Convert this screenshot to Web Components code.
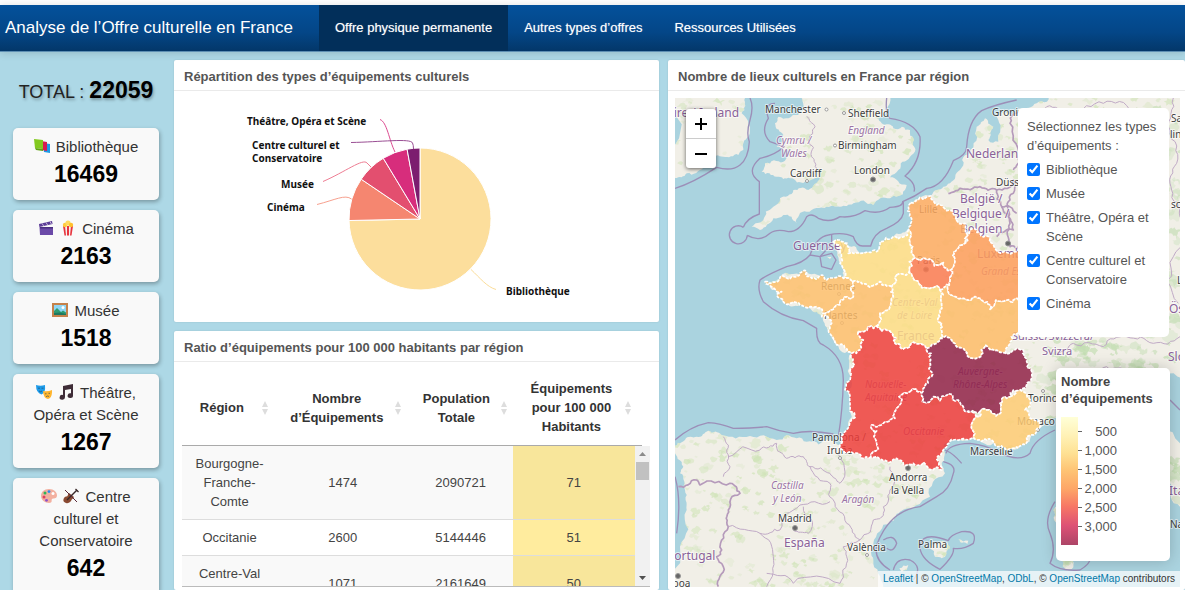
<!DOCTYPE html>
<html lang="fr">
<head>
<meta charset="utf-8">
<title>Analyse de l’Offre culturelle en France</title>
<meta name="viewport" content="width=device-width, initial-scale=1">
<style>
  html, body { height: 100%; margin: 0; }
  body { background: #fff; color: #444; font: 13px/19px "Liberation Sans", Arial, sans-serif; overflow: hidden; }
</style>
</head>
<body>
<culture-dashboard></culture-dashboard>

<script>
const define = (name, html, setup) => {
  const template = document.createElement('template');
  template.innerHTML = html;
  customElements.define(name, class extends HTMLElement {
    constructor() {
      super();
      this.attachShadow({ mode: 'open' }).append(template.content.cloneNode(true));
    }
    connectedCallback() { if (setup) setup(this, this.shadowRoot); }
  });
};

/* ---------- Navigation ---------- */
define('nav-bar', `
<style>
  :host { display: block; box-sizing: border-box; height: 47px; background: linear-gradient(#04519b, #044687 60%, #033769);
    border-bottom: 1px solid #5e8fb3; box-shadow: 0 1px 8px rgba(0,0,0,.15); position: relative; }
  nav { display: flex; height: 100%; align-items: stretch; }
  h1 { margin: 0; padding: 0 26px 0 5px; font-size: 17px; font-weight: 400; line-height: 46px; color: #fff; white-space: nowrap; }
</style>
<nav><h1><slot name="brand"></slot></h1><slot></slot></nav>`);

define('nav-item', `
<style>
  :host { display: block; }
  a { display: block; padding: 0 16px; line-height: 46px; font-size: 13px; color: #fff; text-decoration: none; white-space: nowrap;
    text-shadow: 0 0 1px rgba(255,255,255,.5); }
  :host([active]) a { background: #022f5a; }
</style>
<a href="#"><slot></slot></a>`);

/* ---------- Sidebar cards ---------- */
define('stat-card', `
<style>
  :host { display: block; box-sizing: border-box; padding: 8px 10px 10px; text-align: center; background: #f9f9f9;
    border-radius: 5px; box-shadow: 1px 2px 4px rgba(0,0,0,.3); }
  .label { font-size: 15px; line-height: 22px; color: #333; }
  .value { font-size: 23px; line-height: 32px; font-weight: 700; color: #000; }
</style>
<div class="label"><slot></slot></div>
<div class="value"><slot name="value"></slot></div>`);

const ICONS = {
  books: '<path fill="#1c9be6" d="M9 5l7 1v9l-6-1z"/><path fill="#d81b50" d="M7 3l6 1v9l-5-1z"/><path fill="#83c91f" d="M0 1l9 1v9l-8-1z"/><path fill="#5fa40f" d="M1 10l8 1v2l-7-1z"/>',
  clap: '<path fill="#5b3b96" d="M1 4l13-3 .6 3L1.4 7z"/><path stroke="#c9bddf" stroke-width="1" d="M4 3.400l1.600 2.400M8 2.500l1.600 2.400M12 1.600L13.400 4"/><path fill="#6b4aa8" d="M1.500 7H15v8H2z"/><path fill="#4a2f80" d="M2 7h13v1.500H2z"/>',
  popcorn: '<path fill="#f4f0ee" d="M3 6h10l-1.500 9.500h-7z"/><path fill="#e8343e" d="M3 6h2l1 9.500H4.500zM7 6h2v9.500H7zM11 6h2l-1.500 9.500H10z"/><circle cx="5" cy="5" r="2.200" fill="#ffcb3d"/><circle cx="8" cy="3" r="2.600" fill="#ffd95e"/><circle cx="11" cy="5" r="2.200" fill="#ffc12f"/>',
  frame: '<path fill="#c5824b" d="M0 1h16v14H0z"/><path fill="#8fd6f5" d="M2 3h12v10H2z"/><circle cx="11" cy="5.500" r="1.500" fill="#fff"/><path fill="#2d9c72" d="M2 9l3-3 4 4 2-1.500 3 2V13H2z"/><path fill="#1e7860" d="M2 11l6-.5 6 1.500v1H2z"/>',
  masks: '<path fill="#1d9bea" d="M0 1q4.500 1.500 9 0 .8 8-3.500 9.500Q0 9 0 1z"/><path fill="#ffb52e" d="M7 7q4.500 1 9-1 .4 8-4 9-4.600-.8-5-8z"/><path d="M2 4.200h2M5.500 4.200h2M9 9.800h1.500M12.500 9.300H14M3 7q1.500 1.500 3 0M10 12.800q1.500-1.500 3-.3" fill="none" stroke="#23455f" stroke-width=".6"/>',
  notes: '<path fill="#3f2d38" d="M5 2l10-2v11.500a2.700 2.400 0 1 1-2-2.200V5L7 6v7.300A2.700 2.400 0 1 1 5 11z"/>',
  palette: '<path fill="#f3b0a0" d="M8 1c5 0 8 3 8 6.500S12 10 11 11s1 4-3 4-8-3-8-7 3-7 8-7z"/><circle cx="4" cy="5" r="1.500" fill="#2fb457"/><circle cx="8" cy="3.600" r="1.400" fill="#2b8bea"/><circle cx="3" cy="9" r="1.500" fill="#e0405e"/><circle cx="5.500" cy="12.300" r="1.400" fill="#8e52c7"/><circle cx="12" cy="5.500" r="1.500" fill="#fff"/>',
  violin: '<path fill="#8a4a32" d="M6 5l5 4c-1 2-2 1.800-2.500 3S6 16 3 15s-3-3-2-5 3-1 3.500-2S5 6 6 5z"/><path stroke="#3a2a2a" stroke-width="1.500" d="M4 12l10-10"/><path stroke="#5a2a3a" stroke-width="1" d="M2 2l12 12"/><path stroke="#3a2a2a" stroke-width="1.200" d="M12.500 1l3 3"/>'
};
define('emoji-icon', `
<style>:host { display: inline-block; width: 16px; height: 16px; margin-right: 6px; vertical-align: -2px; } svg { display: block; }</style>
<svg width="16" height="16" viewBox="0 0 16 16" fill="none" aria-hidden="true"></svg>`,
(el, root) => { root.querySelector('svg').innerHTML = ICONS[el.getAttribute('name')]; });

/* ---------- Card with a title ---------- */
define('dash-card', `
<style>
  :host { display: flex; flex-direction: column; background: #fff; border-radius: 2px; min-height: 0; min-width: 0; box-shadow: 0 0 2px rgba(0,0,0,.12); }
  h2 { margin: 0; padding: 8px 10px 4px; font-size: 13px; line-height: 18px; font-weight: 700; color: #555; border-bottom: 1px solid #eaeaea; }
  .body { flex: 1; min-height: 0; display: flex; flex-direction: column; }
</style>
<h2><slot name="title"></slot></h2>
<div class="body"><slot></slot></div>`);

/* ---------- Pie chart ---------- */
define('pie-chart', `
<style>
  :host { display: block; height: 100%; }
  svg { display: block; width: 100%; height: 100%; }
  text { font: 700 10px "Noto Sans", sans-serif; fill: #111; }
</style>
<svg viewBox="174 91 485 231" role="img" aria-label="Répartition des types d’équipements culturels">
  <g id="slices" stroke="#fff" stroke-width="1"></g>
  <g fill="none" stroke-width="1">
    <path stroke="#dd4a90" d="M380 119.500C387 122 389 140 395 152"/>
    <path stroke="#9a4f94" d="M351 142.500C380 142 411 138 412.500 143Q413.500 145 413.500 149"/>
    <path stroke="#ee7d93" d="M323 181.500C345 172 363 158 367 163L371 167"/>
    <path stroke="#f7a08e" d="M317 204.500C335 200 345 194 351.500 199"/>
    <path stroke="#fbdd99" d="M471 269.500C480 278 487 287 496 289.500"/>
  </g>
  <text x="247" y="125">Théâtre, Opéra et Scène</text>
  <text x="252" y="149">Centre culturel et</text>
  <text x="252" y="162">Conservatoire</text>
  <text x="281" y="188">Musée</text>
  <text x="267" y="211">Cinéma</text>
  <text x="506" y="295">Bibliothèque</text>
</svg>`,
(el, root) => {
  const data = [[16469, '#fcde9c'], [2163, '#f58670'], [1518, '#e34f6f'], [1267, '#d72d7c'], [642, '#7c1d6f']];
  const total = data.reduce((s, d) => s + d[0], 0), cx = 420, cy = 219, r = 71;
  let a = 0;
  root.getElementById('slices').innerHTML = data.map(([n, c]) => {
    const b = a + n / total * 2 * Math.PI;
    const p = t => (cx + r * Math.sin(t)).toFixed(2) + ' ' + (cy - r * Math.cos(t)).toFixed(2);
    const d = `M${cx} ${cy}L${p(a)}A${r} ${r} 0 ${b - a > Math.PI ? 1 : 0} 1 ${p(b)}Z`;
    a = b;
    return `<path fill="${c}" d="${d}"/>`;
  }).join('');
});

/* ---------- Ratio table ---------- */
define('ratio-table', `
<style>
  :host { display: flex; flex-direction: column; flex: 1; min-height: 0; padding: 8px 9px 3px 8px; }
  table { table-layout: fixed; border-collapse: collapse; text-align: center; }
  .head { width: calc(100% - 8px); border-bottom: 1px solid #aaa; }
  .rows { flex: 1; min-width: 0; align-self: flex-start; }
  .c1 { width: 21%; } .c2 { width: 29%; } .c3 { width: 23%; } .c4 { width: 27%; }
  th { padding: 9px 0; color: #333; font-size: 13px; line-height: 19px; }
  th div { display: flex; align-items: center; justify-content: center; }
  th span { flex: 1; }
  th svg { flex: none; width: 6px; height: 14px; margin-right: 11px; fill: #ddd; }
  td { padding: 8px 4px; font-size: 13px; line-height: 19px; color: #444; border-bottom: 1px solid #ddd; }
  tr:nth-child(odd) td { background: #f9f9f9; }
  tr td:last-child { background: #ffec9e; }
  tr:nth-child(odd) td:last-child { background: #f8e69b; }
  td:first-child { padding: 8px 12px; }
  .view { display: flex; flex: 1; min-height: 0; overflow: hidden; border-bottom: 1px solid #bbb; }
  .rail { display: flex; flex-direction: column; align-items: center; width: 15px; background: #f1f1f1; }
  .thumb { width: 13px; height: 18px; background: #c1c1c1; margin-bottom: auto; }
  .rail svg { display: block; width: 15px; height: 16px; flex: none; }
</style>
<table class="head">
  <colgroup><col class="c1"><col class="c2"><col class="c3"><col class="c4"></colgroup>
  <thead><tr></tr></thead>
</table>
<div class="view">
  <table class="rows">
    <colgroup><col class="c1"><col class="c2"><col class="c3"><col class="c4"></colgroup>
    <tbody></tbody>
  </table>
  <div class="rail">
    <svg viewBox="0 0 15 16"><path fill="#8b8b8b" d="M4 10h7l-3.500-4z"/></svg>
    <div class="thumb"></div>
    <svg viewBox="0 0 15 16"><path fill="#505050" d="M4 6h7l-3.500 4z"/></svg>
  </div>
</div>`,
(el, root) => {
  const heads = ['Région', 'Nombre<br>d’Équipements', 'Population<br>Totale', 'Équipements<br>pour 100 000<br>Habitants'];
  const rows = [['Bourgogne-<br>Franche-<br>Comte', 1474, 2090721, 71], ['Occitanie', 2600, 5144446, 51], ['Centre-Val<br>de Loire', 1071, 2161649, 50]];
  root.querySelector('thead tr').innerHTML = heads.map(h =>
    `<th scope="col"><div><span>${h}</span><svg viewBox="0 0 6 14" aria-hidden="true"><path d="M3 0l3 6H0zM3 14l3-6H0z"/></svg></div></th>`).join('');
  root.querySelector('tbody').innerHTML = rows.map(r => '<tr>' + r.map(c => `<td>${c}</td>`).join('') + '</tr>').join('');
});

/* ---------- Map ---------- */
// Breaks each straight segment into an irregular coastline. The noise depends
// only on the two end points, so neighbours that share a border stay joined.
const hash = (x, y) => { const s = Math.sin(x * 12.9898 + y * 78.233) * 43758.5453; return s - Math.floor(s); };
const roughen = (str, closed, amount = .22) => {
  const pts = str.trim().split(/\s+/).map(p => p.split(',').map(Number));
  const split = (a, b, depth) => {
    const dx = b[0] - a[0], dy = b[1] - a[1], len = Math.hypot(dx, dy);
    if (depth === 0 || len < 9) return [b];
    const k = (hash(a[0] + b[0], a[1] + b[1]) - .5) * amount * 2;
    const m = [(a[0] + b[0]) / 2 - dy * k, (a[1] + b[1]) / 2 + dx * k];
    return [...split(a, m, depth - 1), ...split(m, b, depth - 1)];
  };
  const out = [pts[0]];
  const n = closed ? pts.length : pts.length - 1;
  for (let i = 0; i < n; i++) {
    const a = pts[i], b = pts[(i + 1) % pts.length];
    const swap = a[0] > b[0] || (a[0] === b[0] && a[1] > b[1]);
    if (swap) { const s = split(b, a, 3); s.pop(); out.push(...s.reverse(), b); }
    else out.push(...split(a, b, 3));
  }
  return 'M' + out.map(p => p[0].toFixed(1) + ' ' + p[1].toFixed(1)).join('L') + (closed ? 'Z' : '');
};

// Land; the points past the frame keep the rough outline out of sight there.
const LAND = [
  '0,0 100,-60 250,0 255,24 245,70 265,140 250,180 235,195 190,200 150,210 130,230 80,250 45,264 0,290',
  '425,24 440,-20 560,-60 680,-20 680,60 650,85 665,100 700,115 750,120 762,150 750,200 715,240 690,262 740,285 735,300 690,325 640,345 580,340 540,350 500,350 440,365 410,400 370,375 340,385 300,420 275,410 310,390 340,350 360,325 400,300 445,300 480,262 435,275 390,265 350,260 305,245 315,220 370,215 392,180 350,170 370,135 345,100 355,80 415,75 430,45',
  '815,315 850,290 870,280 900,240 930,190 950,110 975,85 1000,110 985,150 1015,155 1010,80 1080,55 1130,40 1180,10 1200,-60 1400,-200 1700,-200 1700,200 1700,600 1600,880 1500,860 1490,940 1560,1060 1600,1180 1560,1250 1530,1180 1400,1060 1300,1000 1200,985 1150,1005 1130,1025 1075,1075 1040,1080 1000,1060 935,1045 880,1050 850,1080 845,1120 855,1150 810,1220 720,1265 690,1295 640,1360 640,1410 670,1490 640,1600 400,1800 100,1800 0,1550 60,1370 80,1260 75,1200 60,1150 70,1130 45,1080 75,1050 110,1040 145,1022 185,1035 270,1038 350,1050 410,1045 440,1055 510,1050 540,1065 560,1020 570,940 572,860 575,790 530,765 510,730 490,680 450,655 420,645 370,635 345,600 325,578 360,562 440,545 500,570 550,560 540,520 520,455 555,460 600,490 650,485 665,455 700,440 745,420 758,400 750,370 752,338',
  '812,1370 835,1360 862,1355 870,1375 845,1405 825,1400', '895,1348 925,1352 922,1362 900,1356',
  '718,1435 745,1425 740,1440 725,1445', '1195,1400 1250,1400 1240,1432 1215,1440', '1180,1260 1195,1250 1195,1300 1182,1290', '500,500 515,500 510,507'
];

// Limits of territorial waters.
const WATERS = [
  'M270 24Q282 50 270 90T268 155Q265 205 240 225T170 232Q100 278 45 295',
  'M345 40Q310 40 325 85Q300 125 330 155L372 170Q345 195 300 205Q255 245 298 275V372Q260 385 250 412M262 436Q300 458 330 430Q350 415 385 425Q420 425 440 380Q455 368 475 385Q510 400 540 380Q580 385 615 362Q660 375 690 352Q730 350 728 335Q765 320 800 295Q850 290 880 212Q920 195 920 170Q925 90 965 62Q1000 45 1070 30',
  'M262 436A27 27 0 1 1 250 412', 'M680 24Q675 75 690 85Q760 95 780 140Q785 215 735 258Q770 280 762 305',
  'M450 495Q470 440 505 435Q550 425 580 440Q590 470 610 468L632 468Q640 430 680 415Q725 395 730 370V335M515 435V462L480 500',
  'M480 500L515 490L528 510L515 538L485 530ZM450 495L480 500M450 495Q430 520 380 530Q320 555 300 570Q290 600 310 635Q360 680 430 692L470 715Q468 760 490 765Q550 800 550 870Q548 960 535 1040',
  'M45 1050Q90 1010 145 998Q180 1000 220 1015Q280 1015 320 1010Q360 1025 400 1030Q450 1018 520 1032', 'M45 1160Q65 1230 50 1330',
  'M905 1120Q880 1090 855 1080M850 1115Q890 1125 880 1150Q870 1200 830 1220L780 1250Q690 1260 650 1365Q640 1410 690 1440M670 1350Q700 1330 710 1360Q700 1390 680 1375M700 1440Q710 1400 750 1410Q790 1430 760 1470',
  'M858 1090Q865 1062 930 1060Q980 1065 1010 1085Q1080 1120 1110 1090Q1120 1050 1185 1020',
  'M780 1375Q785 1410 840 1438Q885 1395 880 1375Q910 1380 940 1360Q955 1320 905 1325Q870 1335 865 1352Q780 1320 780 1375',
  'M1185 1235Q1150 1290 1170 1330Q1190 1380 1170 1420Q1200 1445 1260 1440Q1295 1420 1290 1400', 'M1530 930L1560 960'
];
const BORDERS = [
  '55,1190 110,1170 120,1185 210,1180 240,1210 205,1260 205,1310 185,1380 170,1400 190,1430 175,1490',
  '865,310 900,295 960,290 1010,300 1025,350 1070,370', '1010,300 1060,270 1050,330 1045,380 1060,420 1010,440', '1060,240 1075,200 1050,100 1090,60', '1025,350 1050,400 1050,470 1090,460'
];
const THIN = [
  '190,1040 205,1095 190,1160', '205,1100 300,1080 350,1060 380,1105 430,1100 450,1130 510,1150 540,1180 530,1090', '450,1130 510,1180 520,1230 560,1300 600,1350 640,1290 670,1270 690,1200 690,1130',
  '205,1310 300,1330 360,1320 420,1245 510,1235', '300,1330 340,1400 320,1490', '320,1450 400,1480 540,1480 560,1400 550,1370 600,1350', '430,1250 445,1330 400,1320',
  '440,80 465,110 445,150 455,200 470,240', '1190,790 1240,760 1330,770 1400,740 1480,760 1560,740', '1200,870 1260,850 1340,830 1400,850', '1540,24 1530,120 1550,220 1535,300 1560,380 1540,500 1555,640', '1100,60 1160,50 1230,60 1330,40 1420,60'
];

// Regions, drawn over the base map; [fill, outline].
const REGIONS = [
  ['#feaa5f', '392,38 420,22 452,18 470,45 500,62 525,78 555,100 562,135 555,160 530,180 525,215 512,240 490,218 440,210 400,205 398,170 385,120 392,100 390,70'],
  ['#fb7a50', '388,215 400,205 440,210 490,218 512,240 508,285 480,300 450,295 420,285 400,265 388,240'],
  ['#fedc83', '160,155 195,160 205,190 240,190 290,185 300,155 340,140 385,120 398,170 400,205 388,215 388,240 350,255 335,290 300,275 240,275 218,275 190,265 180,220'],
  ['#febf6b', '-45,275 0,262 40,260 80,245 95,265 140,270 170,262 190,265 218,275 220,320 180,345 160,358 130,372 90,350 60,345 10,335 -10,315 5,305 -25,290'],
  ['#febd6a', '218,275 240,275 300,275 335,290 340,320 330,350 300,370 295,405 235,425 250,450 240,480 215,490 170,465 150,430 155,400 125,380 130,372 160,358 180,345 220,320'],
  ['#fedc83', '350,255 388,240 400,265 420,285 450,295 480,300 482,330 480,370 488,410 482,445 440,475 380,475 345,460 335,430 305,425 290,408 295,405 300,370 330,350 340,320 335,290'],
  ['#febb66', '480,300 508,285 545,325 600,325 630,358 680,330 712,325 740,350 712,430 690,460 680,492 655,485 615,465 605,498 560,495 545,475 515,450 482,445 488,410 480,370 482,330'],
  ['#fe9c58', '570,120 600,130 640,165 712,185 760,200 740,350 712,325 680,330 630,358 600,325 545,325 508,285 512,240 525,215 530,180 555,160'],
  ['#ee3d39', '235,425 295,405 290,408 305,425 335,430 345,460 380,475 440,475 452,510 455,560 430,595 425,610 390,605 350,655 345,685 310,700 275,705 285,745 272,802 220,790 180,765 200,720 210,640 212,560 215,490 240,480 250,450'],
  ['#ec3838', '390,605 425,610 427,635 440,638 460,620 480,632 510,612 535,630 560,665 600,680 580,740 520,750 490,780 485,840 450,840 400,820 350,805 310,812 272,802 285,745 275,705 310,700 345,685 350,655'],
  ['#8f1f45', '440,475 482,445 515,450 545,475 560,495 605,498 615,465 655,485 680,492 730,480 740,515 750,575 700,600 690,620 660,640 648,678 600,665 560,665 535,630 510,612 480,632 460,620 440,638 427,635 425,610 430,595 455,560 452,510'],
  ['#fecb72', '690,620 710,602 740,615 735,660 780,690 770,725 740,740 715,775 680,780 645,765 620,750 590,750 580,740 600,680 600,665 648,678 660,640']
];

// [x, baseline, text, class]: c city, n country, r region, s small country or canton name
const LABELS = [
  [667, 117, 'Éire / Ireland', 'n'], [765, 113, 'Manchester', 'c'], [848, 117, 'Sheffield', 'c'], [848, 134, 'England', 'r'], [838, 149, 'Birmingham', 'c'],
  [776, 144, 'Cymru /', 'r'], [781, 157, 'Wales', 'r'], [790, 177, 'Cardiff', 'c'], [854, 174, 'London', 'c'], [793, 250, 'Guernsey', 'n'],
  [919, 213, 'Lille', 'c'], [821, 290, 'Rennes', 'c'], [824, 319, 'Nantes', 'c'], [892, 306, 'Centre-Val', 'r'], [897, 319, 'de Loire', 'r'], [897, 340, 'France', 'n'],
  [992, 116, 'Groningen', 'c'], [966, 158, 'Nederland', 'n'], [996, 186, 'Düsseldorf', 'c'], [960, 203, 'België /', 'n'], [952, 218, 'Belgique /', 'n'], [960, 233, 'Belgien', 'n'],
  [977, 258, 'Luxembourg', 'n'], [981, 275, 'Grand Est', 'r'], [917, 264, 'Paris', 'c'], [865, 388, 'Nouvelle-', 'r'], [865, 401, 'Aquitaine', 'r'], [903, 435, 'Occitanie', 'r'],
  [958, 375, 'Auvergne-', 'r'], [953, 388, 'Rhône-Alpes', 'r'], [812, 441, 'Pamplona /', 'c'], [827, 454, 'Iruña', 'c'], [889, 481, 'Andorra', 'c'], [891, 494, 'la Vella', 'c'],
  [771, 489, 'Castilla', 'r'], [773, 502, 'y León', 'r'], [842, 503, 'Aragón', 'r'], [778, 522, 'Madrid', 'c'], [784, 547, 'España', 'n'], [847, 551, 'València', 'c'], [918, 548, 'Palma', 'c'],
  [667, 560, 'Portugal', 'n'], [660, 587, 'Lisboa', 'c'], [970, 455, 'Marseille', 'c'], [1028, 402, 'Torino', 'c'], [1017, 425, 'Monaco', 'c'], [1042, 355, 'Svizra', 's'], [1012, 340, 'Suisse/Svizzera/', 's'],
  [1168, 361, 'Slovenija', 'n'], [1170, 528, 'Napoli', 'c'], [1169, 495, 'Italia', 'n'], [1171, 122, 'Sachsen', 'c'], [1170, 138, 'lin', 'c'], [1171, 208, 'sc', 'c'], [1177, 284, 'Linz', 'c'], [1169, 313, 'Österreich', 'n']
];
const TOWNS = [[826.500, 109.500], [844, 113], [835, 145.500], [807, 181], [839, 294], [842, 323], [840, 458], [1043, 391], [867, 555], [1038, 430]];
const CAPITALS = [[873, 179.500], [926, 269.500], [908, 468], [795, 528], [1008, 243.500], [678, 576]];

define('region-map', `
<style>
  :host { display: block; flex: 1; min-height: 0; position: relative; overflow: hidden; margin: 7px 5px 3px 7px; background: #aad3df; }
  svg.map { display: block; position: absolute; width: 100%; height: 100%; }
  text { font-family: "Noto Sans", sans-serif; font-size: 10px; paint-order: stroke; stroke: rgba(255,255,255,.6); stroke-width: 2px; stroke-linejoin: round; }
  .c { fill: #3d3d3d; }
  .n { fill: #8a6299; font-size: 12px; }
  .s { fill: #8a6299; font-size: 11px; }
  .r { fill: #9c75a6; font-style: italic; }
  .zoom { position: absolute; left: 11px; top: 11px; width: 30px; display: flex; flex-direction: column; background: #fff;
    border-radius: 3px; box-shadow: 0 1px 4px rgba(0,0,0,.6); }
  .zoom button { height: 29px; padding: 0; border: 0; background: none; display: grid; place-items: center; }
  .zoom button + button { border-top: 1px solid #ccc; height: 30px; }
  .zoom svg { display: block; stroke: #000; stroke-width: 2; }
  .credit { position: absolute; right: 0; bottom: 0; padding: 0 5px; font-size: 10px; line-height: 16px; background: rgba(255,255,255,.7); color: #333; }
  .credit a { color: #0078a8; text-decoration: none; }
  .filter { position: absolute; right: 11px; top: 10px; }
  .legend { position: absolute; right: 10px; bottom: 26px; }
</style>
<svg class="map" viewBox="675 98 505 489" preserveAspectRatio="xMidYMid slice" role="img" aria-label="Carte des lieux culturels par région">
  <defs><clipPath id="land"></clipPath></defs>
  <g transform="translate(660 90) scale(.333333)">
    <g id="ground" fill="#f1efe7"></g>
    <g id="woods" clip-path="url(#land)"></g>
    <g id="lines" fill="none" stroke="#9c8fb8" stroke-linejoin="round"></g>
  </g>
  <g id="labels"></g>
  <g transform="translate(780 190) scale(.333333)">
    <g id="regions" stroke="#fff" stroke-width="5" stroke-linejoin="round" fill-opacity=".84"></g>
  </g>
</svg>
<div class="zoom">
  <button type="button" aria-label="Zoom avant"><svg width="12" height="12"><path d="M0 6h12M6 0v12"/></svg></button>
  <button type="button" aria-label="Zoom arrière"><svg width="12" height="12"><path d="M0 6h12"/></svg></button>
</div>
<div class="filter"><slot name="filter"></slot></div>
<div class="legend"><slot name="legend"></slot></div>
<div class="credit"><a href="#">Leaflet</a> | © <a href="#">OpenStreetMap</a>, <a href="#">ODbL</a>, © <a href="#">OpenStreetMap</a> contributors</div>`,
(el, root) => {
  const $ = id => root.getElementById(id);
  const land = LAND.map(p => `<path d="${roughen(p, true)}"/>`).join('');
  $('ground').innerHTML = land;
  $('land').innerHTML = land;
  let woods = '';
  for (let i = 0; i < 1800; i++) {
    const x = 45 + hash(i, 1) * 1515, y = 24 + hash(i, 2) * 1466;
    const east = x > 1150 && y > 60;
    const r = 4 + hash(i, 3) * (east ? 26 : 15);
    woods += `<path fill="${east ? '#bfdcae' : '#cde3b4'}" fill-opacity="${(.2 + hash(i, 4) * .45).toFixed(2)}" d="${roughen(
      `${x - r},${y} ${x - r * .3},${y - r * .6} ${x + r},${y - r * .2} ${x + r * .4},${y + r * .7}`, true, .35)}"/>`;
  }
  $('woods').innerHTML = woods;
  $('lines').innerHTML =
    WATERS.map(d => `<path stroke-width="4" d="${d}"/>`).join('') +
    BORDERS.map(p => `<path stroke="#b59abb" stroke-width="5" d="${roughen(p, false)}"/>`).join('') +
    THIN.map(p => `<path stroke="#c0aac6" stroke-width="3" d="${roughen(p, false)}"/>`).join('');
  $('labels').innerHTML =
    TOWNS.map(([x, y]) => `<circle cx="${x}" cy="${y}" r="1.500" fill="#fff" stroke="#999"/>`).join('') +
    CAPITALS.map(([x, y]) => `<circle cx="${x}" cy="${y}" r="2.500" fill="#666" stroke="#999"/>`).join('') +
    LABELS.map(([x, y, t, c]) => `<text x="${x}" y="${y}" class="${c}">${t}</text>`).join('');
  $('regions').innerHTML = REGIONS.map(([c, p]) => `<path fill="${c}" stroke-dasharray="9 4" d="${roughen(p, true, .3)}"/>`).join('');
});

define('type-filter', `
<style>
  :host { display: block; box-sizing: border-box; width: 151px; padding: 9px 5px 24px 9px; background: #fff; border-radius: 5px; color: #555; }
  fieldset { border: 0; margin: 0; padding: 0; min-width: 0; }
  legend { padding: 0; line-height: 19px; }
  label { display: flex; align-items: flex-start; gap: 6px; margin-top: 5px; line-height: 19px; }
  input { flex: none; width: 13px; height: 13px; margin: 3px 0 0; accent-color: #0075ff; }
</style>
<fieldset>
  <legend>Sélectionnez les types d’équipements :</legend>
  <label><input type="checkbox" checked><span>Bibliothèque</span></label>
  <label><input type="checkbox" checked><span>Musée</span></label>
  <label><input type="checkbox" checked><span>Théâtre, Opéra et Scène</span></label>
  <label><input type="checkbox" checked><span>Centre culturel et Conservatoire</span></label>
  <label><input type="checkbox" checked><span>Cinéma</span></label>
</fieldset>`);

define('map-legend', `
<style>
  :host { display: block; box-sizing: border-box; width: 114px; height: 193px; padding: 5px; background: #fff; border-radius: 5px; box-shadow: 0 0 15px rgba(0,0,0,.2); color: #555; }
  strong { display: block; line-height: 17px; color: #444; }
  .scale { display: flex; margin-top: 10px; }
  .bar { width: 17px; height: 128px; background: linear-gradient(#ffffcc, #ffeda0 15%, #fed976 28%, #feb24c 42%, #fd8d3c 56%, #f4503a 70%, #d3204f 85%, #95103c); opacity: .78; }
  ul { list-style: none; margin: 0; padding: 5px 0 0; }
  li { display: flex; align-items: center; justify-content: space-between; width: 39px; line-height: 19px; }
  li::before { content: ""; width: 4px; height: 1px; background: #666; }
</style>
<strong>Nombre<br>d’équipements</strong>
<div class="scale"><div class="bar"></div>
<ul><li>500</li><li>1,000</li><li>1,500</li><li>2,000</li><li>2,500</li><li>3,000</li></ul></div>`);

/* ---------- Page ---------- */
define('culture-dashboard', `
<style>
  :host { display: flex; flex-direction: column; box-sizing: border-box; height: 100vh; padding-top: 5px; }
  main { flex: 1; min-height: 0; display: grid; grid-template-columns: 174px 485fr 9px 517fr; background: #add8e6; }
  aside { display: flex; flex-direction: column; gap: 10px; padding: 22px 15px 0 13px; overflow: hidden; }
  stat-card { flex: none; }
  .total { margin: 0; padding-bottom: 10px; text-align: center; font-size: 18px; line-height: 32px; color: #222; white-space: nowrap; text-shadow: 1px 2px 3px rgba(0,0,0,.3); }
  .total b { font-size: 23px; color: #000; }
  .left { display: grid; grid-template-rows: 262px minmax(0, 1fr); gap: 9px; min-height: 0; padding-top: 8px; }
  .right { grid-column: 4; margin-top: 8px; }
</style>
<nav-bar>
  <span slot="brand">Analyse de l’Offre culturelle en France</span>
  <nav-item active>Offre physique permanente</nav-item>
  <nav-item>Autres types d’offres</nav-item>
  <nav-item>Ressources Utilisées</nav-item>
</nav-bar>
<main>
  <aside>
    <p class="total">TOTAL : <b>22059</b></p>
    <stat-card><emoji-icon name="books"></emoji-icon>Bibliothèque<span slot="value">16469</span></stat-card>
    <stat-card><emoji-icon name="clap"></emoji-icon><emoji-icon name="popcorn"></emoji-icon>Cinéma<span slot="value">2163</span></stat-card>
    <stat-card><emoji-icon name="frame"></emoji-icon>Musée<span slot="value">1518</span></stat-card>
    <stat-card><emoji-icon name="masks"></emoji-icon><emoji-icon name="notes"></emoji-icon>Théâtre, Opéra et Scène<span slot="value">1267</span></stat-card>
    <stat-card><emoji-icon name="palette"></emoji-icon><emoji-icon name="violin"></emoji-icon>Centre culturel et Conservatoire<span slot="value">642</span></stat-card>
  </aside>
  <div class="left">
    <dash-card><span slot="title">Répartition des types d’équipements culturels</span><pie-chart></pie-chart></dash-card>
    <dash-card><span slot="title">Ratio d’équipements pour 100 000 habitants par région</span><ratio-table></ratio-table></dash-card>
  </div>
  <dash-card class="right"><span slot="title">Nombre de lieux culturels en France par région</span>
    <region-map><type-filter slot="filter"></type-filter><map-legend slot="legend"></map-legend></region-map>
  </dash-card>
</main>`);
</script>
</body>
</html>
